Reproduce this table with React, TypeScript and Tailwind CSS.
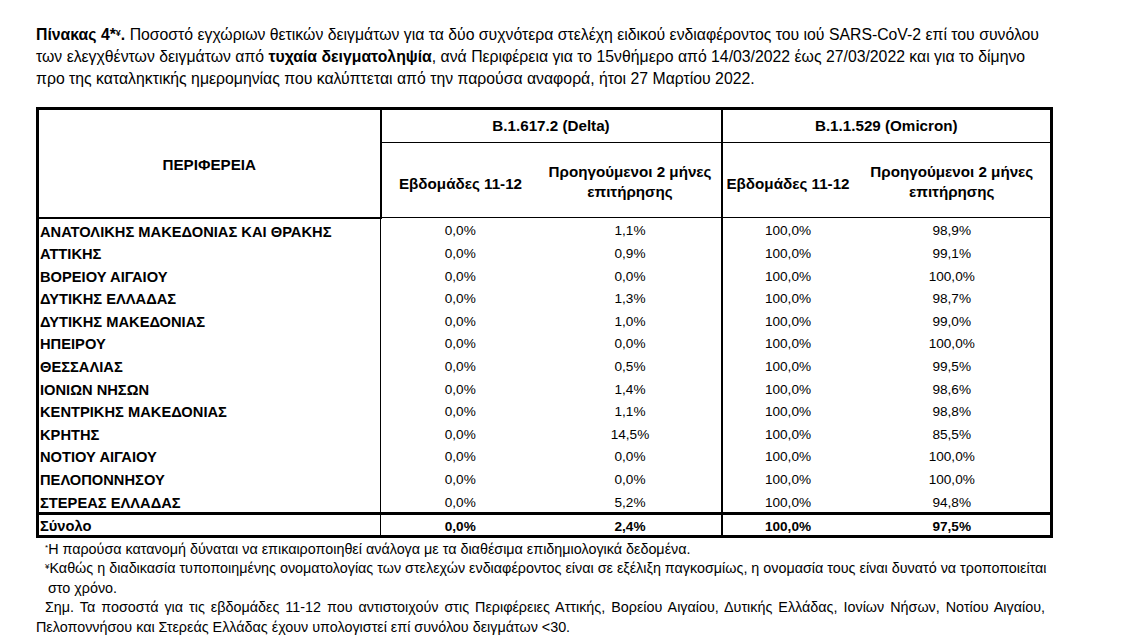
import React from 'react';

const rows: [string, string, string, string, string][] = [
  ['ΑΝΑΤΟΛΙΚΗΣ ΜΑΚΕΔΟΝΙΑΣ ΚΑΙ ΘΡΑΚΗΣ', '0,0%', '1,1%', '100,0%', '98,9%'],
  ['ΑΤΤΙΚΗΣ', '0,0%', '0,9%', '100,0%', '99,1%'],
  ['ΒΟΡΕΙΟΥ ΑΙΓΑΙΟΥ', '0,0%', '0,0%', '100,0%', '100,0%'],
  ['ΔΥΤΙΚΗΣ ΕΛΛΑΔΑΣ', '0,0%', '1,3%', '100,0%', '98,7%'],
  ['ΔΥΤΙΚΗΣ ΜΑΚΕΔΟΝΙΑΣ', '0,0%', '1,0%', '100,0%', '99,0%'],
  ['ΗΠΕΙΡΟΥ', '0,0%', '0,0%', '100,0%', '100,0%'],
  ['ΘΕΣΣΑΛΙΑΣ', '0,0%', '0,5%', '100,0%', '99,5%'],
  ['ΙΟΝΙΩΝ ΝΗΣΩΝ', '0,0%', '1,4%', '100,0%', '98,6%'],
  ['ΚΕΝΤΡΙΚΗΣ ΜΑΚΕΔΟΝΙΑΣ', '0,0%', '1,1%', '100,0%', '98,8%'],
  ['ΚΡΗΤΗΣ', '0,0%', '14,5%', '100,0%', '85,5%'],
  ['ΝΟΤΙΟΥ ΑΙΓΑΙΟΥ', '0,0%', '0,0%', '100,0%', '100,0%'],
  ['ΠΕΛΟΠΟΝΝΗΣΟΥ', '0,0%', '0,0%', '100,0%', '100,0%'],
  ['ΣΤΕΡΕΑΣ ΕΛΛΑΔΑΣ', '0,0%', '5,2%', '100,0%', '94,8%'],
];

// header cell
const th = 'border-black font-bold text-[15.2px] p-0';
// body cell
const td = 'p-0 pt-[4px] leading-[18.6px] text-center';
const tdTotal = 'p-0 pt-[4px] leading-[15.6px] text-center';

export default function App() {
  return (
    <div className="w-[1138px] h-[644px] bg-white text-black overflow-hidden pl-[36px] pt-[24px] font-['Liberation_Sans',Arial,sans-serif]">
      {/* title */}
      <div className="text-[15.8px] leading-[22px] whitespace-nowrap">
        <div>
          <b>
            Πίνακας 4*<sup className="text-[9px]">¥</sup>.
          </b>{' '}
          Ποσοστό εγχώριων θετικών δειγμάτων για τα δύο συχνότερα στελέχη ειδικού ενδιαφέροντος του ιού SARS-CoV-2 επί του συνόλου
        </div>
        <div>
          των ελεγχθέντων δειγμάτων από <b>τυχαία δειγματοληψία</b>, ανά Περιφέρεια για το 15νθήμερο από 14/03/2022 έως 27/03/2022 και για το δίμηνο
        </div>
        <div>προ της καταληκτικής ημερομηνίας που καλύπτεται από την παρούσα αναφορά, ήτοι 27 Μαρτίου 2022.</div>
      </div>

      {/* table */}
      <table className="mt-[17px] w-[1014px] border-collapse border-[3px] border-black table-fixed text-[13.6px]">
        <colgroup>
          <col className="w-[343px]" />
          <col className="w-[159px]" />
          <col className="w-[182px]" />
          <col className="w-[132px]" />
          <col className="w-[198px]" />
        </colgroup>
        <thead>
          <tr className="h-[34px]">
            <th rowSpan={2} className={`${th} border-r-2 border-b-2 align-middle pt-[4px]`}>
              ΠΕΡΙΦΕΡΕΙΑ
            </th>
            <th colSpan={2} className={`${th} border-r-2 border-b`}>
              B.1.617.2 (Delta)
            </th>
            <th colSpan={2} className={`${th} border-b`}>
              B.1.1.529 (Omicron)
            </th>
          </tr>
          <tr className="h-[75px]">
            <th className={`${th} border-b pt-[8px] whitespace-nowrap`}>Εβδομάδες 11-12</th>
            <th className={`${th} border-r-2 border-b leading-[20px] pt-[4px] whitespace-nowrap`}>
              Προηγούμενοι 2 μήνες
              <br />
              επιτήρησης
            </th>
            <th className={`${th} border-b pt-[8px] whitespace-nowrap`}>Εβδομάδες 11-12</th>
            <th className={`${th} border-b leading-[20px] pt-[4px] whitespace-nowrap`}>
              Προηγούμενοι 2 μήνες
              <br />
              επιτήρησης
            </th>
          </tr>
        </thead>
        <tbody>
          {rows.map((r) => (
            <tr key={r[0]}>
              <td className="p-0 pt-[4px] leading-[18.6px] border-r border-black font-bold pl-[1px] text-[14.7px] whitespace-nowrap">
                {r[0]}
              </td>
              <td className={td}>{r[1]}</td>
              <td className={`${td} border-r-2 border-black`}>{r[2]}</td>
              <td className={td}>{r[3]}</td>
              <td className={td}>{r[4]}</td>
            </tr>
          ))}
          <tr className="border-t-[3px] border-black font-bold">
            <td className="p-0 pt-[4px] leading-[15.6px] border-r border-black pl-[1px] text-[14.7px]">Σύνολο</td>
            <td className={tdTotal}>0,0%</td>
            <td className={`${tdTotal} border-r-2 border-black`}>2,4%</td>
            <td className={tdTotal}>100,0%</td>
            <td className={tdTotal}>97,5%</td>
          </tr>
        </tbody>
      </table>

      {/* footnotes */}
      <div className="text-[14.35px] leading-[19.5px] mt-[2px] whitespace-nowrap">
        <div className="pl-[9px]">
          <sup className="text-[8px]">*</sup>Η παρούσα κατανομή δύναται να επικαιροποιηθεί ανάλογα με τα διαθέσιμα επιδημιολογικά δεδομένα.
        </div>
        <div className="pl-[9px]">
          <sup className="text-[8px]">¥</sup>Καθώς η διαδικασία τυποποιημένης ονοματολογίας των στελεχών ενδιαφέροντος είναι σε εξέλιξη παγκοσμίως, η ονομασία τους είναι δυνατό να τροποποιείται
        </div>
        <div className="pl-[12px]">στο χρόνο.</div>
        <div className="pl-[9px] w-[1009px] whitespace-normal text-justify [text-align-last:justify]">
          Σημ. Τα ποσοστά για τις εβδομάδες 11-12 που αντιστοιχούν στις Περιφέρειες Αττικής, Βορείου Αιγαίου, Δυτικής Ελλάδας, Ιονίων Νήσων, Νοτίου Αιγαίου,
        </div>
        <div>Πελοποννήσου και Στερεάς Ελλάδας έχουν υπολογιστεί επί συνόλου δειγμάτων &lt;30.</div>
      </div>
    </div>
  );
}
